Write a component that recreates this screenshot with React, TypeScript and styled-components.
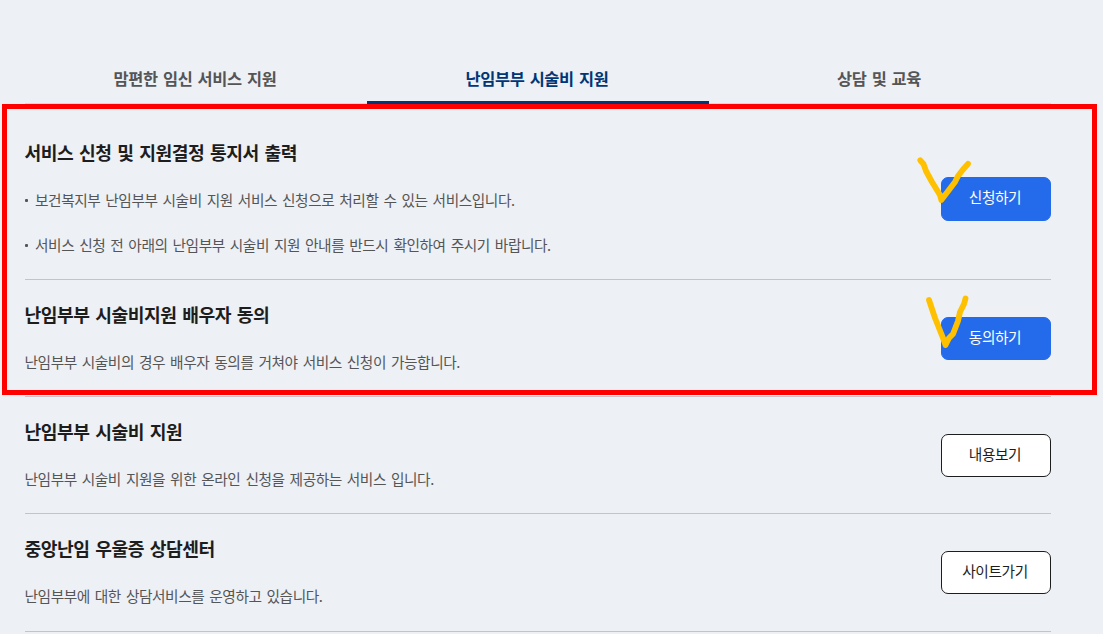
import styled, { createGlobalStyle } from "styled-components";

const GlobalStyle = createGlobalStyle`
	* {
		box-sizing: border-box;
	}
	body {
		margin: 0;
		background: #edf0f5;
		font-family: "Noto Sans CJK KR", "Noto Sans", sans-serif;
	}
`;

const Page = styled.main`
	position: relative;
	width: 1103px;
	height: 634px;
	padding: 54px 52px 0 25px;
	overflow: hidden;
`;

const Tabs = styled.nav`
	display: grid;
	grid-template-columns: repeat(3, 1fr);
	height: 50px;
	box-shadow: inset 0 -1px #d3d6da;
`;

const Tab = styled.a<{ $active?: boolean }>`
	display: flex;
	justify-content: center;
	padding: 11px 2px 0 0;
	border-bottom: 3px solid ${(p) => (p.$active ? "#003675" : "transparent")};
	color: ${(p) => (p.$active ? "#003675" : "#555")};
	font-size: 16.4px;
	font-weight: 700;
	line-height: 26px;
	letter-spacing: -0.37px;
	word-spacing: 1.9px;
	cursor: pointer;
`;

const ServiceList = styled.ul`
	margin: 14px 0 0;
	padding: 0;
	list-style: none;
`;

const Service = styled.li`
	display: flex;
	justify-content: space-between;
	align-items: center;
	padding: 21px 0 22px;
	border-bottom: 1px solid #c1c5c9;
	&:last-child {
		padding-bottom: 23px;
	}
`;

const Title = styled.h3`
	margin: 0 0 21px;
	color: #1d1d1d;
	font-size: 18.2px;
	font-weight: 700;
	line-height: 27px;
	letter-spacing: -0.48px;
	word-spacing: 2.1px;
	text-indent: -0.5px;
`;

const Text = styled.p<{ $bullet?: boolean }>`
	display: flex;
	align-items: center;
	margin: 0;
	color: #555;
	font-size: 14.7px;
	line-height: 25px;
	letter-spacing: -0.45px;
	word-spacing: 2.15px;
	text-indent: -0.5px;
	& + & {
		margin-top: 20px;
	}
	&::before {
		content: "";
		display: ${(p) => (p.$bullet ? "block" : "none")};
		width: 3px;
		height: 3px;
		margin: 2px 7.5px 0 0;
		border-radius: 1px;
		background: #555;
	}
`;

const Button = styled.button<{ $primary?: boolean; $tall?: boolean }>`
	width: 110px;
	height: ${(p) => (p.$tall ? 44 : 43)}px;
	margin-top: 2px;
	padding: 0 2px 5px 0;
	border: 1px solid ${(p) => (p.$primary ? "#246beb" : "#1d1d1d")};
	border-radius: 7px;
	background: ${(p) => (p.$primary ? "#246beb" : "#fff")};
	color: ${(p) => (p.$primary ? "#fff" : "#1d1d1d")};
	font-family: inherit;
	font-size: 14.7px;
	letter-spacing: -0.42px;
	cursor: pointer;
`;

const Highlight = styled.div`
	position: absolute;
	top: 104px;
	left: 2px;
	width: 1095px;
	height: 291px;
	border: 5px solid #f00;
	pointer-events: none;
`;

const Marks = styled.svg`
	position: absolute;
	top: 150px;
	left: 910px;
	fill: none;
	stroke: #ffc000;
	stroke-width: 5.8;
	stroke-linecap: round;
	stroke-linejoin: round;
	pointer-events: none;
`;

const tabs = ["맘편한 임신 서비스 지원", "난임부부 시술비 지원", "상담 및 교육"];

const services = [
	{
		title: "서비스 신청 및 지원결정 통지서 출력",
		texts: [
			"보건복지부 난임부부 시술비 지원 서비스 신청으로 처리할 수 있는 서비스입니다.",
			"서비스 신청 전 아래의 난임부부 시술비 지원 안내를 반드시 확인하여 주시기 바랍니다.",
		],
		button: "신청하기",
		primary: true,
	},
	{
		title: "난임부부 시술비지원 배우자 동의",
		texts: ["난임부부 시술비의 경우 배우자 동의를 거쳐야 서비스 신청이 가능합니다."],
		button: "동의하기",
		primary: true,
	},
	{
		title: "난임부부 시술비 지원",
		texts: ["난임부부 시술비 지원을 위한 온라인 신청을 제공하는 서비스 입니다."],
		button: "내용보기",
		primary: false,
	},
	{
		title: "중앙난임 우울증 상담센터",
		texts: ["난임부부에 대한 상담서비스를 운영하고 있습니다."],
		button: "사이트가기",
		primary: false,
	},
];

const App = () => {
	return (
		<Page>
			<GlobalStyle />
			<Tabs>
				{tabs.map((tab, i) => (
					<Tab key={tab} $active={i === 1}>
						{tab}
					</Tab>
				))}
			</Tabs>
			<ServiceList>
				{services.map(({ title, texts, button, primary }) => (
					<Service key={title}>
						<div>
							<Title>{title}</Title>
							{texts.map((text) => (
								<Text key={text} $bullet={texts.length > 1}>
									{text}
								</Text>
							))}
						</div>
						<Button $primary={primary} $tall={texts.length > 1}>
							{button}
						</Button>
					</Service>
				))}
			</ServiceList>
			<Highlight />
			<Marks width="70" height="205" viewBox="910 150 70 205">
				<path d="M920.3 160.3L923.5 164L926 171L932 182L940 195L941.3 200L955 182L958 176L963 169.5L968 163.8" />
				<path d="M929 300L935 318L943 338L945.5 345L949 338L953 334L958 321L960 312L964 304L965.5 298.5" />
			</Marks>
		</Page>
	);
};

export default App;
